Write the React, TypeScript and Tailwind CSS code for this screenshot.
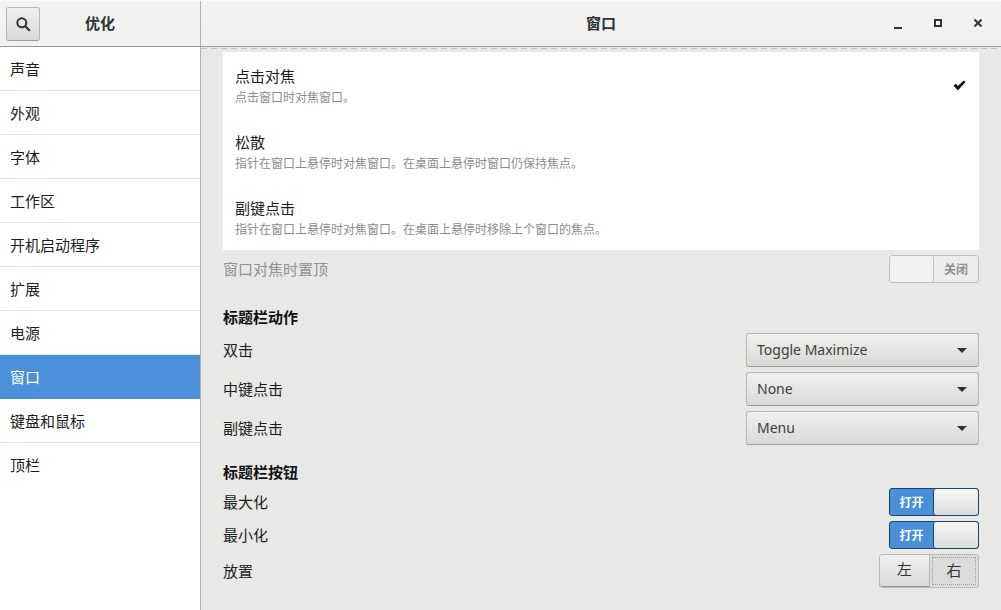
import React from "react";

const F = "font-['Noto_Sans','Noto_Sans_CJK_SC',sans-serif]";
const items = ["声音", "外观", "字体", "工作区", "开机启动程序", "扩展", "电源", "窗口", "键盘和鼠标", "顶栏"];

function Caret() {
  return (
    <svg width="10" height="5" viewBox="0 0 10 5" className="shrink-0">
      <path d="M0 0H10L5 5Z" fill="#2e3436" />
    </svg>
  );
}

function Combo({ label }: { label: string }) {
  return (
    <div className="w-[233px] h-[34px] rounded-[3px] border border-[#b6b6b3] border-b-[#9a9a97] bg-gradient-to-b from-[#f0f0ee] to-[#d9d9d6] flex items-center justify-between pl-[10px] pr-[11px] text-[14px] text-[#3a3f41]">
      <span className="mt-[-2px]">{label}</span>
      <Caret />
    </div>
  );
}

function SwitchOn() {
  return (
    <div className="w-[90px] h-[28px] rounded-[3px] border border-[#184472] bg-[#4a90d9] flex overflow-hidden">
      <div className="w-[43px] pt-px flex items-center justify-center text-white text-[12px] font-bold">打开</div>
      <div className="flex-1 border-l border-[#184472] rounded-[3px] bg-gradient-to-b from-[#f6f6f5] to-[#dcdcda]" />
    </div>
  );
}

function ModeRow({ title, desc, check }: { title: string; desc: string; check?: boolean }) {
  return (
    <div className="h-[66px] pl-[12px] pr-[12px] flex items-center justify-between">
      <div className="flex flex-col gap-[5px] pt-px">
        <div className="text-[15px] leading-[20px] text-[#1a1d1e]">{title}</div>
        <div className="text-[12px] leading-[14px] text-[#8a8e8f]">{desc}</div>
      </div>
      {check && (
        <svg width="13" height="11" viewBox="0 0 13 11" className="mt-[1px] mr-[1px]">
          <path d="M0.5 5.5L3 3.8L4.8 6L10.8 0.5L12.5 2L4.8 10.5Z" fill="#111" />
        </svg>
      )}
    </div>
  );
}

function Row({ label, children, cls }: { label: string; children: React.ReactNode; cls: string }) {
  return (
    <div className={`flex items-center justify-between ${cls}`}>
      <span className="text-[15px] text-[#1a1d1e]">{label}</span>
      {children}
    </div>
  );
}

export default function App() {
  return (
    <div className="w-[1001px] h-[610px] bg-white">
      <div className={`w-full h-full overflow-hidden rounded-t-[4px] flex flex-col bg-[#e8e8e7] text-[#2e3436] ${F}`}>
        <header className="h-[47px] shrink-0 flex border-t border-t-[#fbfbfb] border-b border-b-[#9a9a97] bg-gradient-to-b from-[#f3f3f2] to-[#f0f0ef]">
          <div className="w-[201px] shrink-0 border-r border-[#b0b0ad] flex items-center pl-[6px]">
            <button className="w-[34px] h-[34px] rounded-[3px] border border-[#b6b6b3] border-b-[#9a9a97] bg-gradient-to-b from-[#f0f0ee] to-[#d9d9d6] flex items-center justify-center">
              <svg width="16" height="16" viewBox="0 0 16 16">
                <circle cx="6.8" cy="6.8" r="4.5" fill="none" stroke="#2e3436" strokeWidth="2" />
                <path d="M10 10L14.8 14.8" stroke="#2e3436" strokeWidth="2.2" />
              </svg>
            </button>
            <div className="w-[120px] text-center text-[15px] font-bold text-[#2e3436]">优化</div>
          </div>
          <div className="flex-1 relative flex items-center justify-center text-[15px] font-bold text-[#2e3436]">
            <span>窗口</span>
            <div className="absolute right-[3px] top-0 h-full flex items-center">
              <div className="w-[40px] flex justify-center">
                <svg width="8" height="8" viewBox="0 0 8 8" className="mt-[3px]"><path d="M0 7H8" stroke="#2e3436" strokeWidth="2" /></svg>
              </div>
              <div className="w-[40px] flex justify-center">
                <svg width="8" height="8" viewBox="0 0 8 8" className="mt-[-1px]"><rect x="1" y="1" width="6" height="6" fill="none" stroke="#2e3436" strokeWidth="2" /></svg>
              </div>
              <div className="w-[40px] flex justify-center">
                <svg width="8" height="8" viewBox="0 0 8 8" className="mt-[-1px]"><path d="M0.5 0.5L7.5 7.5M7.5 0.5L0.5 7.5" stroke="#2e3436" strokeWidth="2" /></svg>
              </div>
            </div>
          </div>
        </header>
        <div className="flex-1 flex min-h-0">
          <nav className="w-[201px] shrink-0 bg-white border-r border-[#b0b0ad]">
            {items.map((t) => (
              <div
                key={t}
                className={`h-[44px] pl-[10px] pt-[2px] flex items-center text-[15px] border-b ${
                  t === "窗口" ? "bg-[#4a90d9] text-white border-[#4a90d9]" : "text-[#1a1d1e] border-[#e4e4e2]"
                } ${t === "顶栏" ? "border-transparent" : ""}`}
              >
                {t}
              </div>
            ))}
          </nav>
          <main className="flex-1 min-w-0 flex flex-col">
            <div className="mt-[1px] h-px bg-[repeating-linear-gradient(90deg,#c0c0bd_0px,#c0c0bd_6px,transparent_6px,transparent_10px)]" />
            <div className="pl-[22px] pr-[22px] pt-[3px]">
              <div className="bg-white">
                <ModeRow title="点击对焦" desc="点击窗口时对焦窗口。" check />
                <ModeRow title="松散" desc="指针在窗口上悬停时对焦窗口。在桌面上悬停时窗口仍保持焦点。" />
                <ModeRow title="副键点击" desc="指针在窗口上悬停时对焦窗口。在桌面上悬停时移除上个窗口的焦点。" />
              </div>
              <div className="mt-[5px] flex items-center justify-between">
                <span className="text-[15px] text-[#8f9292]">窗口对焦时置顶</span>
                <div className="w-[90px] h-[28px] rounded-[3px] border border-[#c0c0bd] bg-[#ececeb] flex">
                  <div className="w-[44px] border-r border-[#c0c0bd] rounded-[3px] bg-[#f1f1f0]" />
                  <div className="flex-1 pt-px flex items-center justify-center text-[12px] font-bold text-[#8f9292]">关闭</div>
                </div>
              </div>
              <div className="mt-[24px] text-[15px] leading-[20px] font-bold text-[#111]">标题栏动作</div>
              <Row label="双击" cls="mt-[6px]"><Combo label="Toggle Maximize" /></Row>
              <Row label="中键点击" cls="mt-[5px]"><Combo label="None" /></Row>
              <Row label="副键点击" cls="mt-[5px]"><Combo label="Menu" /></Row>
              <div className="mt-[17px] text-[15px] leading-[20px] font-bold text-[#111]">标题栏按钮</div>
              <Row label="最大化" cls="mt-[6px]"><SwitchOn /></Row>
              <Row label="最小化" cls="mt-[5px]"><SwitchOn /></Row>
              <Row label="放置" cls="mt-[5px]">
                <div className="w-[100px] h-[34px] rounded-[3px] border border-[#b9b9b6] flex text-[15px] text-[#2e3436]">
                  <div className="w-[50px] pb-[2px] flex items-center justify-center border-r border-[#b9b9b6] border-b border-b-[#9a9a97] rounded-l-[3px] bg-gradient-to-b from-[#f0f0ee] to-[#d9d9d6]">左</div>
                  <div className="flex-1 p-[2px] rounded-r-[3px] bg-[#dcdcda]">
                    <div className="w-full h-full pb-[2px] border border-dotted border-[#9a9a97] flex items-center justify-center">右</div>
                  </div>
                </div>
              </Row>
            </div>
          </main>
        </div>
      </div>
    </div>
  );
}
